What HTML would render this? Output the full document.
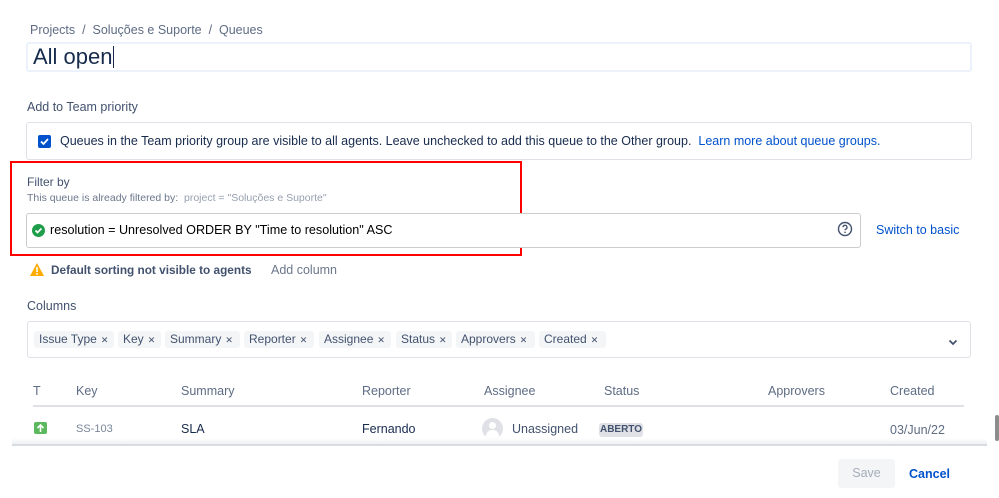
<!DOCTYPE html>
<html><head><meta charset="utf-8"><style>
*{margin:0;padding:0;box-sizing:border-box}
body{width:999px;height:498px;background:#fff;position:relative;overflow:hidden;font-family:"Liberation Sans",Arial,sans-serif;color:#172b4d;font-size:12.5px}
.a{position:absolute;white-space:nowrap}
.box{position:absolute;border:1px solid #dfe1e6;border-radius:3px;background:#fff}
.tag{position:absolute;top:331px;height:17px;background:#f4f5f7;border-radius:3px;color:#42526e;font-size:12px;line-height:17px;padding-left:5px;white-space:nowrap;overflow:hidden}
.tag span{font-size:9px;margin-left:4px;color:#42526e}
.th{position:absolute;top:384px;color:#5e6c84;font-size:12.5px}
</style></head><body>
<div class="a" style="left:30px;top:23px;color:#5e6c84">Projects &nbsp;/&nbsp; Soluções e Suporte &nbsp;/&nbsp; Queues</div>
<div class="box" style="left:26px;top:42px;width:946px;height:30px;border:2px solid #ebf2fc"></div>
<div class="a" style="left:33px;top:44px;font-size:22px;color:#172b4d">All open<span style="display:inline-block;width:1px;height:22px;background:#172b4d;vertical-align:-4px"></span></div>
<div class="a" style="left:27px;top:100px;color:#42526e">Add to Team priority</div>
<div class="box" style="left:26px;top:122px;width:946px;height:38px"></div>
<div class="a" style="left:38px;top:135px;width:13px;height:13px;background:#0052cc;border-radius:2px"><svg width="13" height="13"><path d="M3 6.5l2.5 2.5 4.5-5" stroke="#fff" stroke-width="1.8" fill="none"/></svg></div>
<div class="a" style="left:60px;top:134px;color:#172b4d">Queues in the Team priority group are visible to all agents. Leave unchecked to add this queue to the Other group. &nbsp;<span style="color:#0052cc">Learn more about queue groups.</span></div>
<div class="a" style="left:10px;top:161px;width:512px;height:95px;border:2px solid #f00"></div>
<div class="a" style="left:27px;top:175px;color:#42526e;font-size:12px">Filter by</div>
<div class="a" style="left:27px;top:192px;color:#6b778c;font-size:10.5px">This queue is already filtered by: &nbsp;<span style="color:#97a0af">project = "Soluções e Suporte"</span></div>
<div class="box" style="left:26px;top:213px;width:835px;height:35px;border:1px solid #ccc"></div>
<div class="a" style="left:32px;top:224px;width:13px;height:13px;border-radius:50%;background:#1e9e4a"><svg width="13" height="13"><path d="M3.5 6.5l2 2 4-4" stroke="#fff" stroke-width="1.7" fill="none"/></svg></div>
<div class="a" style="left:50px;top:223px;font-size:12.6px;color:#000">resolution = Unresolved ORDER BY "Time to resolution" ASC</div>
<svg class="a" style="left:837px;top:221px" width="16" height="16"><circle cx="8" cy="8" r="6.5" stroke="#42526e" stroke-width="1.4" fill="none"/><path d="M6 6.3a2 2 0 1 1 2.6 1.9c-.5.2-.6.5-.6 1.1" stroke="#42526e" stroke-width="1.3" fill="none"/><circle cx="8" cy="11.3" r=".8" fill="#42526e"/></svg>
<div class="a" style="left:876px;top:223px;color:#0052cc">Switch to basic</div>
<svg class="a" style="left:29px;top:262px" width="16" height="15"><path d="M8 1L15 14H1Z" fill="#ffab00"/><rect x="7.2" y="5" width="1.6" height="5" fill="#fff"/><rect x="7.2" y="11" width="1.6" height="1.6" fill="#fff"/></svg>
<div class="a" style="left:51px;top:263px;color:#42526e;font-weight:bold;font-size:11.8px">Default sorting not visible to agents</div>
<div class="a" style="left:271px;top:263px;color:#6b778c">Add column</div>
<div class="a" style="left:27px;top:299px;color:#42526e">Columns</div>
<div class="box" style="left:27px;top:321px;width:944px;height:37px"></div>
<div class="tag" style="left:34px;width:80px">Issue Type<span>✕</span></div>
<div class="tag" style="left:118px;width:43px">Key<span>✕</span></div>
<div class="tag" style="left:165px;width:75px">Summary<span>✕</span></div>
<div class="tag" style="left:244px;width:70px">Reporter<span>✕</span></div>
<div class="tag" style="left:319px;width:72px">Assignee<span>✕</span></div>
<div class="tag" style="left:396px;width:56px">Status<span>✕</span></div>
<div class="tag" style="left:456px;width:79px">Approvers<span>✕</span></div>
<div class="tag" style="left:539px;width:67px">Created<span>✕</span></div>
<svg class="a" style="left:948px;top:339px" width="10" height="7"><path d="M1.5 1.5l3.5 3.5 3.5-3.5" stroke="#42526e" stroke-width="1.8" fill="none"/></svg>
<div class="th" style="left:33px">T</div>
<div class="th" style="left:76px">Key</div>
<div class="th" style="left:181px">Summary</div>
<div class="th" style="left:362px">Reporter</div>
<div class="th" style="left:484px">Assignee</div>
<div class="th" style="left:604px">Status</div>
<div class="th" style="left:768px">Approvers</div>
<div class="th" style="left:890px">Created</div>
<div class="a" style="left:33px;top:405px;width:931px;height:2px;background:#dfe1e6"></div>
<div class="a" style="left:34px;top:422px;width:13px;height:12px;background:#5cb85c;border-radius:2px"><svg width="13" height="12"><path d="M6.5 10V3M3.5 6l3-3 3 3" stroke="#fff" stroke-width="1.6" fill="none"/></svg></div>
<div class="a" style="left:76px;top:423px;color:#7a869a;font-size:11px">SS-103</div>
<div class="a" style="left:181px;top:422px">SLA</div>
<div class="a" style="left:362px;top:422px">Fernando</div>
<div class="a" style="left:482px;top:418px;width:21px;height:21px;border-radius:50%;background:#dfe1e6;overflow:hidden"><div style="position:absolute;left:7px;top:4px;width:7px;height:7px;border-radius:50%;background:#fff"></div><div style="position:absolute;left:4px;top:12px;width:13px;height:10px;border-radius:6px 6px 0 0;background:#fff"></div></div>
<div class="a" style="left:512px;top:422px;color:#42526e">Unassigned</div>
<div class="a" style="left:599px;top:423px;width:44px;height:14px;background:#dfe1e6;border-radius:3px;color:#42526e;font-size:10px;font-weight:bold;text-align:center;line-height:14px">ABERTO</div>
<div class="a" style="left:890px;top:423px;color:#5e6c84">03/Jun/22</div>
<div class="a" style="left:0;top:442px;width:999px;height:56px;background:#fff"></div>
<div class="a" style="left:12px;top:444px;width:975px;height:2px;background:#d8dbe0"></div>
<div class="a" style="left:12px;top:438px;width:975px;height:6px;background:linear-gradient(#fff0,#eef0f3)"></div>
<div class="a" style="left:995px;top:415px;width:4px;height:26px;background:#8c8c8c;border-radius:2px"></div>
<div class="a" style="left:838px;top:459px;width:57px;height:29px;background:#f4f5f7;border-radius:3px;color:#a5adba;text-align:center;line-height:29px">Save</div>
<div class="a" style="left:909px;top:467px;color:#0052cc;font-weight:bold">Cancel</div>
</body></html>
